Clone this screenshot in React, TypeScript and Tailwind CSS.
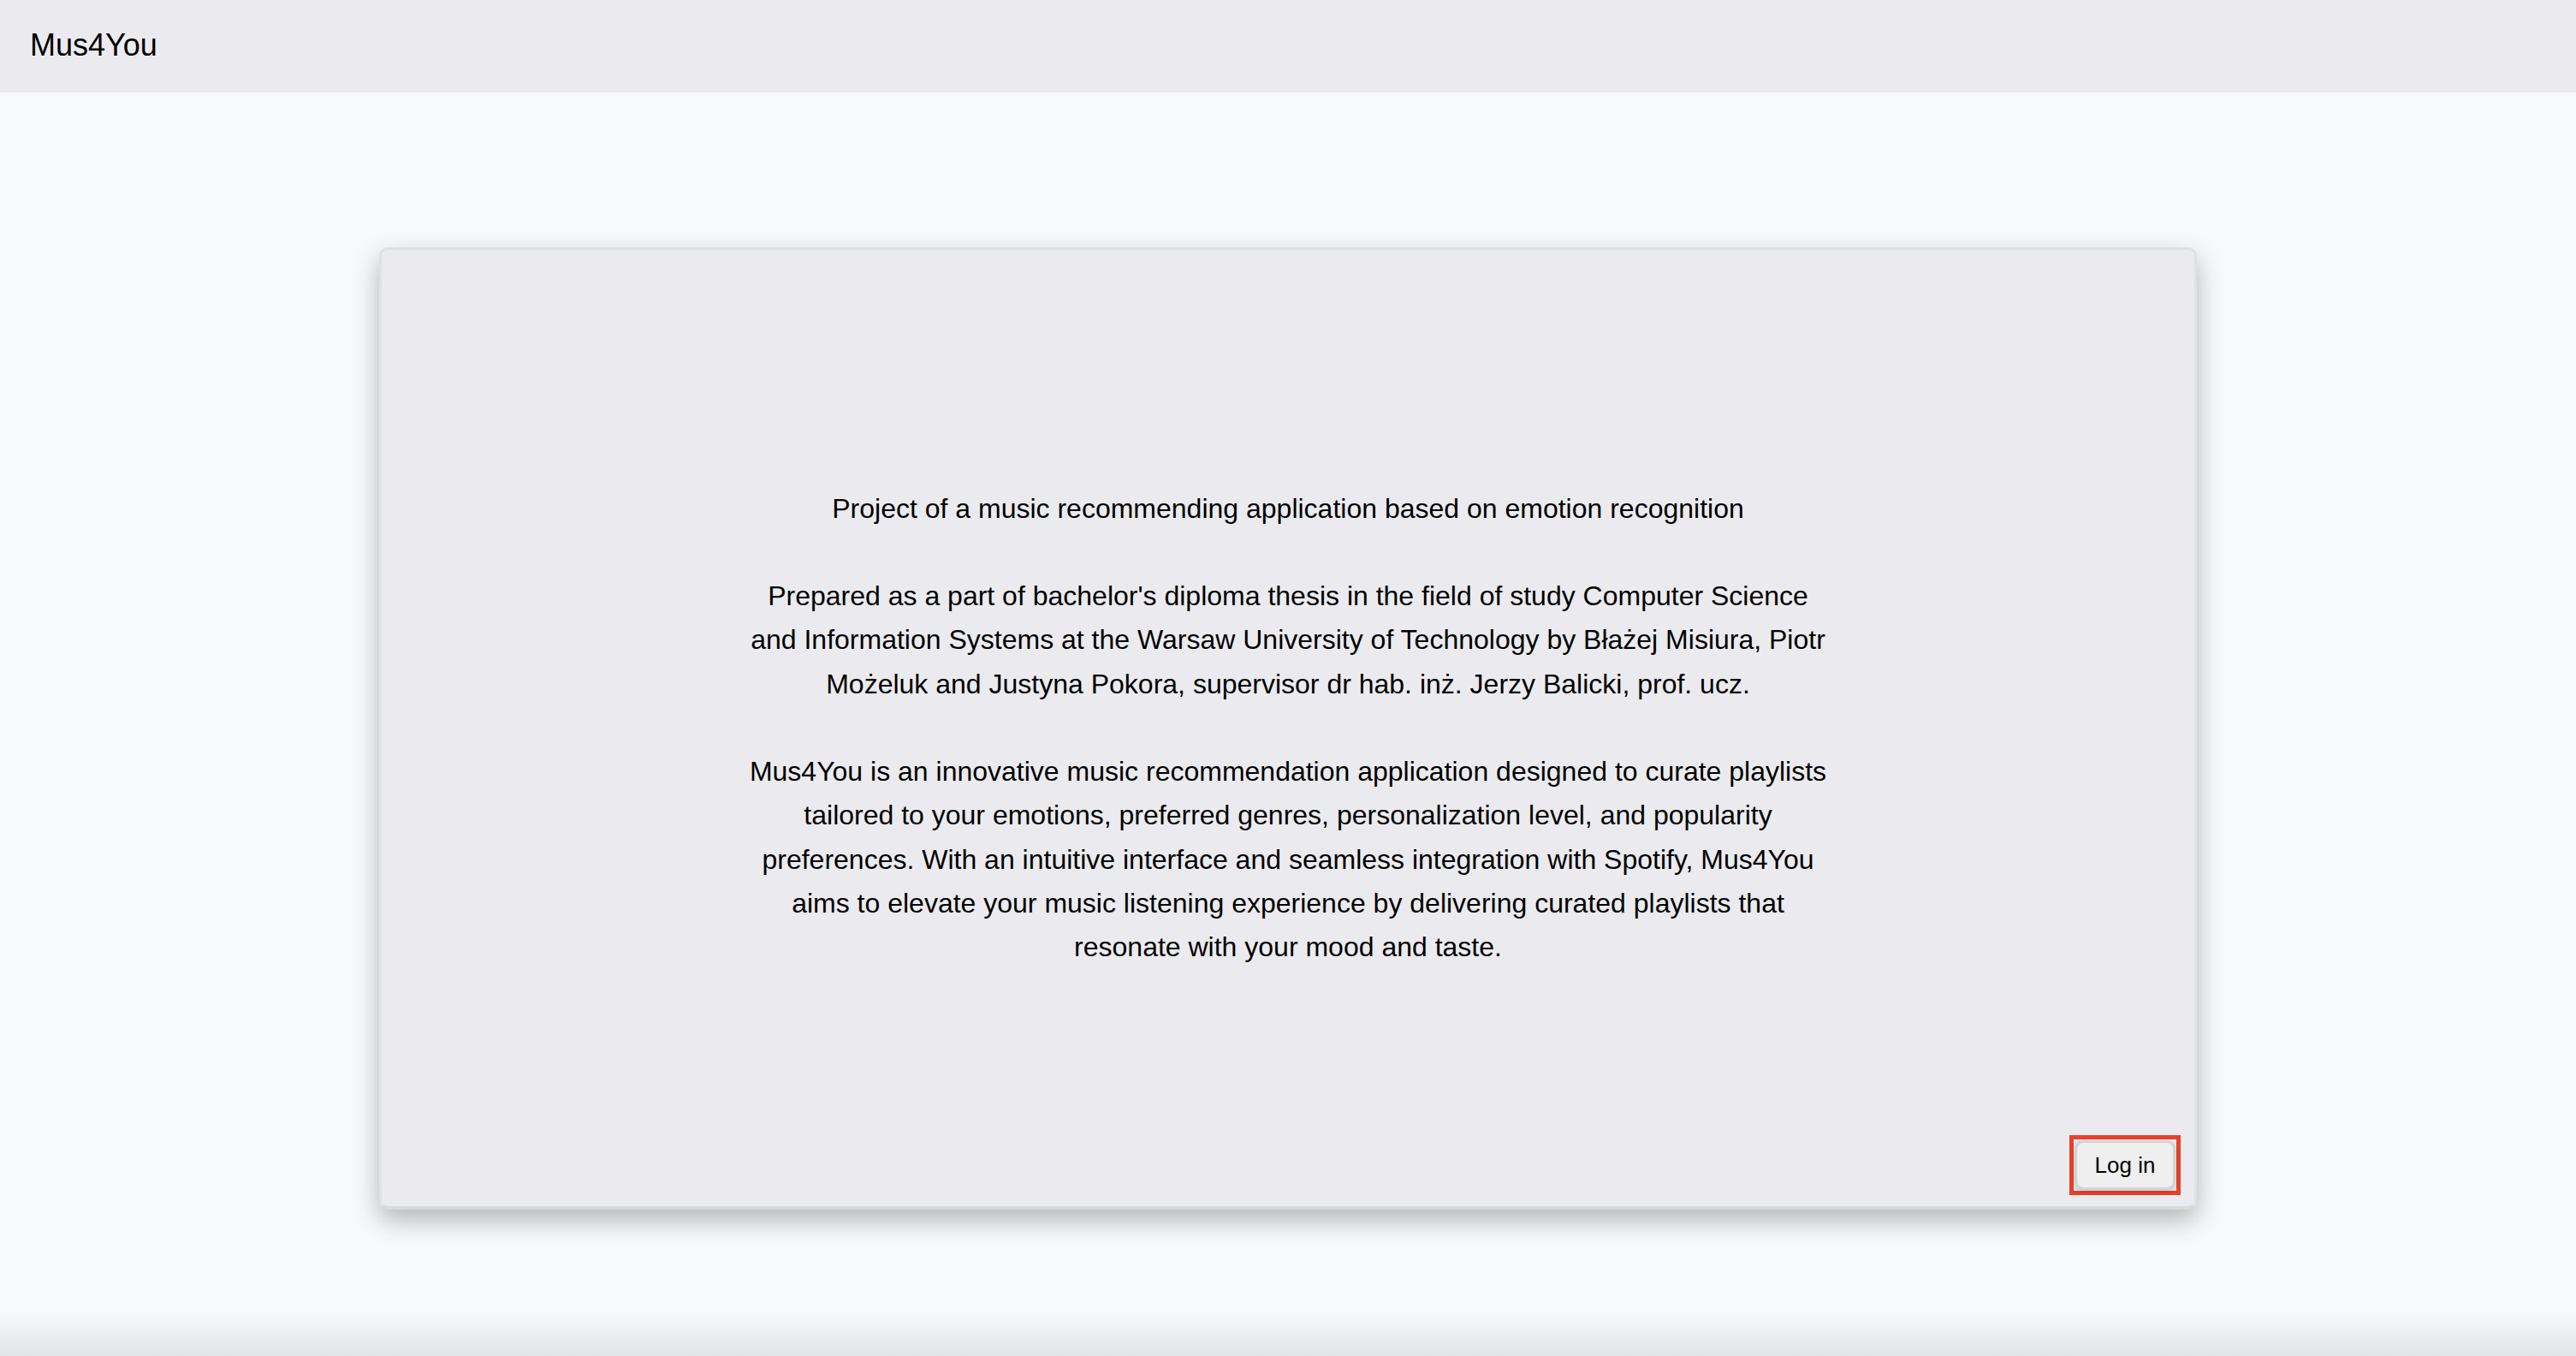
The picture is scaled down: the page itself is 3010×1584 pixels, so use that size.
import React from "react";

export default function App() {
  return (
    <div
      className="flex h-screen flex-col overflow-hidden bg-[#f8f9fa] text-black"
      style={{ fontFamily: '"Liberation Sans", Arial, Helvetica, sans-serif' }}
    >
      <header className="flex h-[108px] shrink-0 items-center bg-[#ebebef] pb-[2px] pl-[35px]">
        <span className="text-[36px] leading-none">Mus4You</span>
      </header>
      <main className="flex flex-1 justify-center pt-[181px]">
        <div className="relative flex h-[1124px] w-[2124px] items-center justify-center rounded-[10px] border-[3px] border-b-[4px] border-[#e0e1e6] border-b-[#d9dadf] bg-[#ebebef] shadow-[0_12px_30px_rgba(0,0,0,0.28)]">
          <div className="w-[1264px] text-center text-[32px] leading-[51.2px]">
            <p>Project of a music recommending application based on emotion recognition</p>
            <br />
            <p>
              Prepared as a part of bachelor's diploma thesis in the field of study Computer Science and
              Information Systems at the Warsaw University of Technology by Błażej Misiura, Piotr Możeluk and
              Justyna Pokora, supervisor dr hab. inż. Jerzy Balicki, prof. ucz.
            </p>
            <br />
            <p>
              Mus4You is an innovative music recommendation application designed to curate playlists tailored to
              your emotions, preferred genres, personalization level, and popularity preferences. With an
              intuitive interface and seamless integration with Spotify, Mus4You aims to elevate your music
              listening experience by delivering curated playlists that resonate with your mood and taste.
            </p>
          </div>
          <div className="absolute bottom-[13px] right-[16px] border-[5px] border-[#e8422a] p-[1px]">
            <button className="flex h-[58px] w-[118px] items-center justify-center rounded-[10px] border-[3px] border-[#d3d3d3] bg-[#efefef] text-[26px] leading-none text-black shadow-[0_3px_6px_rgba(0,0,0,0.15)]">
              Log in
            </button>
          </div>
        </div>
      </main>
      <div className="h-[50px] shrink-0 bg-gradient-to-b from-[#f8f9fa] to-[#e2e3e5]" />
    </div>
  );
}
